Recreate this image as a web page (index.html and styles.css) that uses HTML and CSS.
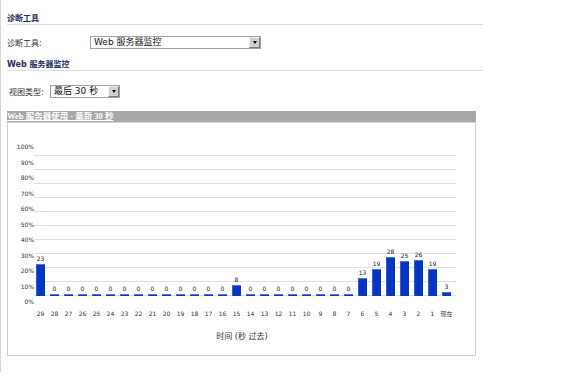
FILE: index.html
```html
<!DOCTYPE html>
<html lang="zh-CN">
<head>
<meta charset="utf-8">
<title>Web 服务器监控</title>
<link rel="stylesheet" href="styles.css">
</head>
<body>
<div class="frame">
  <div class="content">
    <div class="sec-title">诊断工具</div>
    <div class="form-row row1">
      <span class="label l1">诊断工具:</span>
      <div class="select s1"><span class="sel-text">Web 服务器监控</span><span class="sel-btn"><i class="tri"></i></span></div>
    </div>
    <div class="sec-title t2">Web 服务器监控</div>
    <div class="form-row row2">
      <span class="label l2">视图类型:</span>
      <div class="select s2"><span class="sel-text">最后 30 秒</span><span class="sel-btn"><i class="tri"></i></span></div>
    </div>
    <div class="panel">
      <div class="panel-head"><span class="head-text">Web 服务器使用 - 最新 30 秒</span></div>
      <div class="panel-body">
        <div class="chart">
          <div class="y-axis">
            <span>100%</span><span>90%</span><span>80%</span><span>70%</span><span>60%</span><span>50%</span><span>40%</span><span>30%</span><span>20%</span><span>10%</span><span>0%</span>
          </div>
          <div class="plot-col">
            <div class="plot">
              <div class="bar-col"><span class="val">23</span><div class="bar" style="height:32px"></div></div>
              <div class="bar-col"><span class="val">0</span><div class="bar" style="height:2px"></div></div>
              <div class="bar-col"><span class="val">0</span><div class="bar" style="height:2px"></div></div>
              <div class="bar-col"><span class="val">0</span><div class="bar" style="height:2px"></div></div>
              <div class="bar-col"><span class="val">0</span><div class="bar" style="height:2px"></div></div>
              <div class="bar-col"><span class="val">0</span><div class="bar" style="height:2px"></div></div>
              <div class="bar-col"><span class="val">0</span><div class="bar" style="height:2px"></div></div>
              <div class="bar-col"><span class="val">0</span><div class="bar" style="height:2px"></div></div>
              <div class="bar-col"><span class="val">0</span><div class="bar" style="height:2px"></div></div>
              <div class="bar-col"><span class="val">0</span><div class="bar" style="height:2px"></div></div>
              <div class="bar-col"><span class="val">0</span><div class="bar" style="height:2px"></div></div>
              <div class="bar-col"><span class="val">0</span><div class="bar" style="height:2px"></div></div>
              <div class="bar-col"><span class="val">0</span><div class="bar" style="height:2px"></div></div>
              <div class="bar-col"><span class="val">0</span><div class="bar" style="height:2px"></div></div>
              <div class="bar-col"><span class="val">8</span><div class="bar" style="height:11px"></div></div>
              <div class="bar-col"><span class="val">0</span><div class="bar" style="height:2px"></div></div>
              <div class="bar-col"><span class="val">0</span><div class="bar" style="height:2px"></div></div>
              <div class="bar-col"><span class="val">0</span><div class="bar" style="height:2px"></div></div>
              <div class="bar-col"><span class="val">0</span><div class="bar" style="height:2px"></div></div>
              <div class="bar-col"><span class="val">0</span><div class="bar" style="height:2px"></div></div>
              <div class="bar-col"><span class="val">0</span><div class="bar" style="height:2px"></div></div>
              <div class="bar-col"><span class="val">0</span><div class="bar" style="height:2px"></div></div>
              <div class="bar-col"><span class="val">0</span><div class="bar" style="height:2px"></div></div>
              <div class="bar-col"><span class="val">13</span><div class="bar" style="height:18px"></div></div>
              <div class="bar-col"><span class="val">19</span><div class="bar" style="height:27px"></div></div>
              <div class="bar-col"><span class="val">28</span><div class="bar" style="height:39px"></div></div>
              <div class="bar-col"><span class="val">25</span><div class="bar" style="height:35px"></div></div>
              <div class="bar-col"><span class="val">26</span><div class="bar" style="height:36px"></div></div>
              <div class="bar-col"><span class="val">19</span><div class="bar" style="height:27px"></div></div>
              <div class="bar-col"><span class="val">3</span><div class="bar" style="height:4px"></div></div>
            </div>
            <div class="x-axis">
              <span>29</span><span>28</span><span>27</span><span>26</span><span>25</span><span>24</span><span>23</span><span>22</span><span>21</span><span>20</span><span>19</span><span>18</span><span>17</span><span>16</span><span>15</span><span>14</span><span>13</span><span>12</span><span>11</span><span>10</span><span>9</span><span>8</span><span>7</span><span>6</span><span>5</span><span>4</span><span>3</span><span>2</span><span>1</span><span>现在</span>
            </div>
            <div class="x-title">时间 (秒 过去)</div>
          </div>
        </div>
      </div>
    </div>
  </div>
</div>
</body>
</html>
```

FILE: styles.css
```css
html, body {
  margin: 0;
  padding: 0;
  background: #ffffff;
}

body {
  font-family: "DejaVu Sans", "Noto Sans CJK SC", sans-serif;
  color: #333333;
}

.frame {
  box-sizing: border-box;
  height: 372px;
  width: 490px;
  border-left: 1px solid #d6d6d6;
  padding-left: 6px;
}

.content {
  width: 476px;
}

.sec-title {
  font-size: 8px;
  font-weight: bold;
  color: #1d2b69;
  height: 10px;
  line-height: 10px;
  padding-top: 14px;
  border-bottom: 1px solid #dddddd;
}

.sec-title.t2 {
  padding-top: 11px;
}

.form-row {
  display: flex;
  align-items: center;
  height: 13px;
}

.row1 {
  margin-top: 11px;
}

.row2 {
  margin-top: 14px;
}

.label {
  font-size: 8px;
  color: #333333;
  white-space: nowrap;
}

.l1 {
  width: 83px;
}

.l2 {
  width: 41px;
  margin-left: 2px;
}

.select {
  box-sizing: border-box;
  height: 13px;
  border: 1px solid #a3a3a3;
  background: #ffffff;
  display: flex;
  align-items: center;
  justify-content: space-between;
  padding-left: 3px;
  font-size: 9px;
  color: #111111;
}

.s1 {
  width: 171px;
}

.s2 {
  width: 70px;
}

.sel-text {
  white-space: nowrap;
  line-height: 11px;
}

.sel-btn {
  box-sizing: border-box;
  width: 11px;
  height: 11px;
  background: #d4d0c8;
  border: 1px solid;
  border-color: #f4f4f4 #7a7a7a #7a7a7a #f4f4f4;
  display: flex;
  align-items: center;
  justify-content: center;
}

.tri {
  display: block;
  width: 0;
  height: 0;
  border-left: 2.5px solid transparent;
  border-right: 2.5px solid transparent;
  border-top: 3px solid #000000;
}

.panel {
  margin-top: 13px;
  width: 469px;
}

.panel-head {
  height: 11px;
  background: #a8a8a8;
  border-bottom: 1px solid #d4d4d4;
  line-height: 11px;
  font-size: 8.5px;
  font-family: "Liberation Serif", "Noto Sans CJK SC", serif;
  font-weight: bold;
  color: #ffffff;
}

.head-text {
  text-decoration: underline;
  white-space: nowrap;
}

.panel-body {
  height: 232px;
  border: 1px solid #cfcfcf;
  border-top: none;
}

.chart {
  display: flex;
  align-items: flex-start;
}

.y-axis {
  width: 26px;
  margin-top: 20px;
  height: 163px;
  display: flex;
  flex-direction: column;
  justify-content: space-between;
  align-items: flex-end;
  font-size: 6px;
  line-height: 8px;
  color: #333333;
}

.plot-col {
  margin-top: 32px;
  width: 422px;
}

.plot {
  height: 141px;
  box-sizing: border-box;
  padding-left: 2px;
  display: flex;
  align-items: flex-end;
  gap: 5px;
  background: repeating-linear-gradient(to bottom, #e0e0e0 0, #e0e0e0 1px, transparent 1px, transparent 14px);
}

.bar-col {
  width: 9px;
  display: flex;
  flex-direction: column;
  align-items: center;
}

.val {
  font-size: 6px;
  line-height: 8px;
  margin-bottom: 1px;
  color: #222222;
  white-space: nowrap;
}

.bar {
  width: 9px;
  box-sizing: border-box;
  background: #0535c6;
  border-top: 1px solid #4d74e0;
  border-left: 1px solid #2f5ad8;
}

.x-axis {
  margin-top: 14px;
  height: 8px;
  padding-left: 2px;
  display: flex;
  gap: 5px;
  font-size: 6px;
  line-height: 8px;
  color: #333333;
}

.x-axis span {
  width: 9px;
  display: flex;
  justify-content: center;
  white-space: nowrap;
}

.x-title {
  margin-top: 14px;
  font-size: 8px;
  line-height: 10px;
  text-align: center;
  padding-right: 6px;
  color: #333333;
}
```
